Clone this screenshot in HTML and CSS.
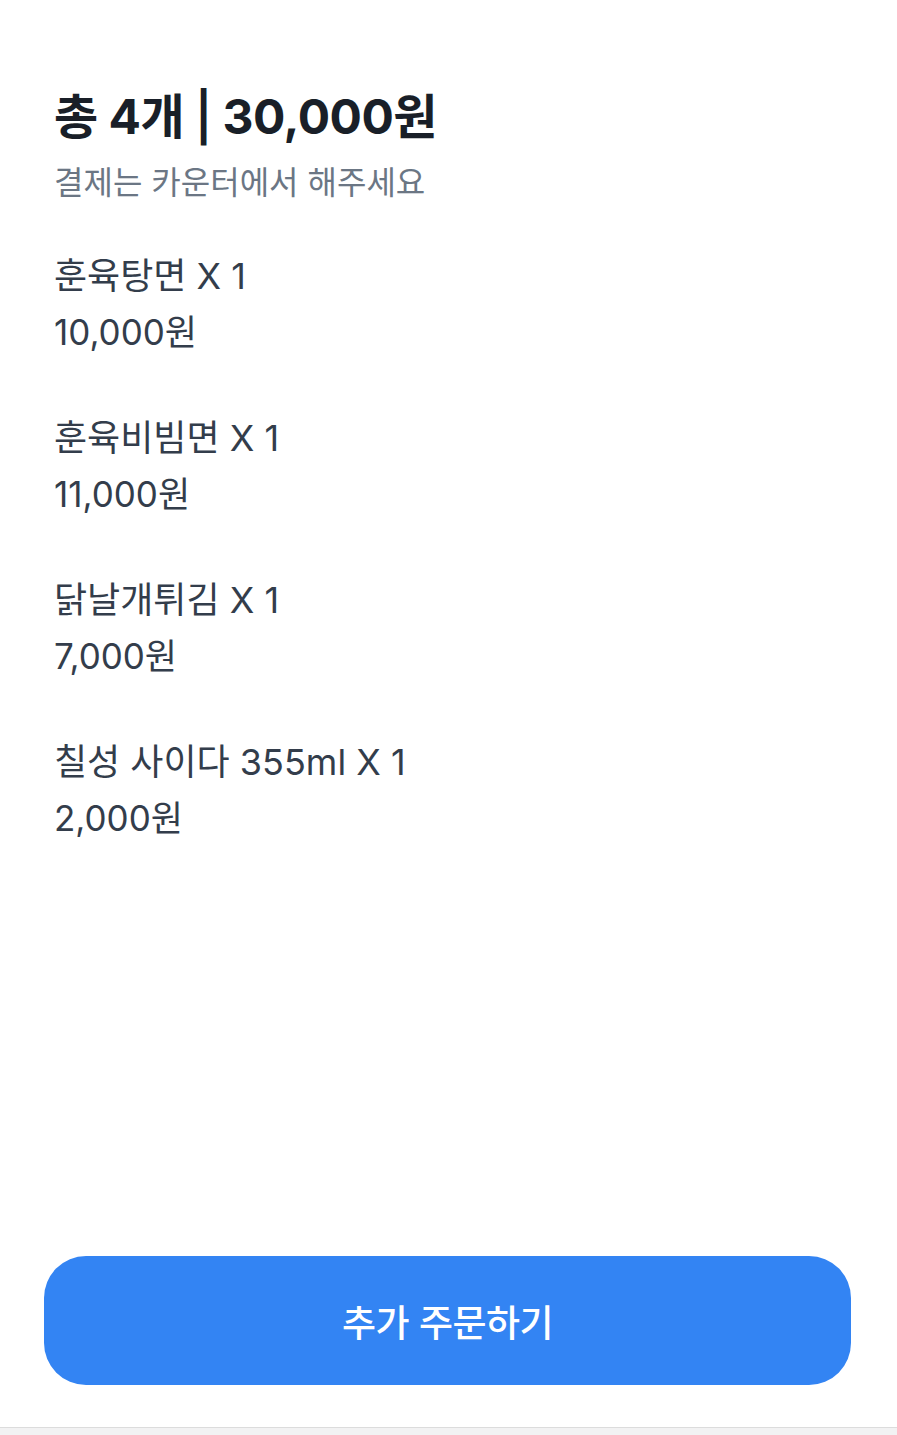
FILE: index.html
```html
<!DOCTYPE html>
<html lang="ko">
<head>
<meta charset="utf-8">
<link rel="stylesheet" href="styles.css">
</head>
<body>
<div class="page">
  <main class="content">
    <h1 class="total">총 4개 <span class="sep">|</span> 30,000원</h1>
    <p class="note">결제는 카운터에서 해주세요</p>
    <ul class="items">
      <li class="item"><div class="name">훈육탕면 X 1</div><div class="price">10,000원</div></li>
      <li class="item"><div class="name">훈육비빔면 X 1</div><div class="price">11,000원</div></li>
      <li class="item"><div class="name">닭날개튀김 X 1</div><div class="price">7,000원</div></li>
      <li class="item"><div class="name">칠성 사이다 355ml X 1</div><div class="price">2,000원</div></li>
    </ul>
  </main>
  <div class="footer">
    <button class="order-btn">추가 주문하기</button>
  </div>
  <div class="bottom-strip"></div>
</div>
</body>
</html>
```

FILE: styles.css
```css
* { box-sizing: border-box; }
html, body { margin: 0; padding: 0; background: #ffffff; }
body {
  font-family: Inter, "Noto Sans CJK KR", sans-serif;
  width: 897px;
  height: 1435px;
  overflow: hidden;
}
.page {
  display: flex;
  flex-direction: column;
  height: 1435px;
}
.content {
  flex: 1;
  padding: 84px 0 0 54px;
}
.total {
  margin: 0;
  font-size: 48px;
  font-weight: 700;
  line-height: 66px;
  color: #191f28;
  letter-spacing: -0.5px;
}
.sep {
  font-weight: 600;
}
.note {
  margin: 0;
  font-size: 32px;
  line-height: 66px;
  color: #6b7684;
}
.items {
  list-style: none;
  margin: 32px 0 0;
  padding: 0;
  display: flex;
  flex-direction: column;
  gap: 50px;
}
.item { color: #333d4b; }
.name {
  font-size: 36px;
  line-height: 56px;
}
.price {
  font-size: 35px;
  line-height: 56px;
}
.footer {
  padding: 0 46px 42px 44px;
}
.order-btn {
  display: block;
  width: 100%;
  height: 129px;
  border: none;
  border-radius: 42px;
  background: #3384f3;
  color: #ffffff;
  font-family: "Noto Sans CJK KR", sans-serif;
  font-size: 37px;
  font-weight: 500;
  letter-spacing: -0.5px;
}
.bottom-strip {
  height: 8px;
  background: #f2f2f3;
  border-top: 1px solid #dcdcdc;
}
```
